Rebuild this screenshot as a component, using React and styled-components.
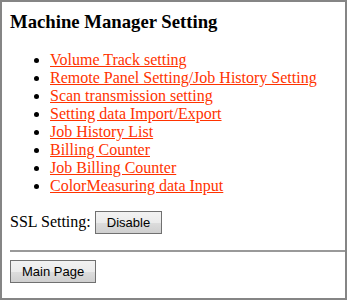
import React from "react";
import styled, { createGlobalStyle } from "styled-components";

const GlobalStyle = createGlobalStyle`
  html, body {
    margin: 0;
    padding: 0;
    background: #ffffff;
  }
`;

const Frame = styled.div`
  box-sizing: border-box;
  width: 347px;
  height: 300px;
  border: 2px solid #858585;
  padding: 8px;
  overflow: hidden;
  font-family: "Liberation Serif", "Times New Roman", serif;
  font-size: 16px;
  color: #000;
  background: #fff;
`;

const Title = styled.h3`
  font-size: 18.72px;
  font-weight: bold;
  margin: 1px 0 17.72px;
`;

const MenuList = styled.ul`
  margin: 16px 0;
  padding-left: 40px;
  line-height: 18px;
  list-style: disc;
`;

const MenuLink = styled.a`
  color: #ff3300;
  text-decoration: underline;
  cursor: pointer;
`;

const SslRow = styled.p`
  margin: 16px 0;
`;

const Button = styled.button`
  font-family: "Liberation Sans", Arial, sans-serif;
  font-size: 13px;
  color: #000;
  height: 23px;
  padding: 0 ${(p) => p.$pad || 10}px;
  border: 1px solid #707070;
  border-radius: 0;
  background: linear-gradient(#f2f2f2, #ebebeb 50%, #dddddd 51%, #cfcfcf);
  cursor: pointer;
`;

const Rule = styled.hr`
  border: 0;
  border-top: 2px solid #999999;
  height: 0;
  margin: 16px -8px 8px 0;
`;

const items = [
  "Volume Track setting",
  "Remote Panel Setting/Job History Setting",
  "Scan transmission setting",
  "Setting data Import/Export",
  "Job History List",
  "Billing Counter",
  "Job Billing Counter",
  "ColorMeasuring data Input",
];

export default function App() {
  return (
    <>
      <GlobalStyle />
      <Frame>
        <Title>Machine Manager Setting</Title>
        <MenuList>
          {items.map((item) => (
            <li key={item}>
              <MenuLink>{item}</MenuLink>
            </li>
          ))}
        </MenuList>
        <SslRow>
          SSL Setting: <Button $pad={11}>Disable</Button>
        </SslRow>
        <Rule />
        <Button $pad={11}>Main Page</Button>
      </Frame>
    </>
  );
}
